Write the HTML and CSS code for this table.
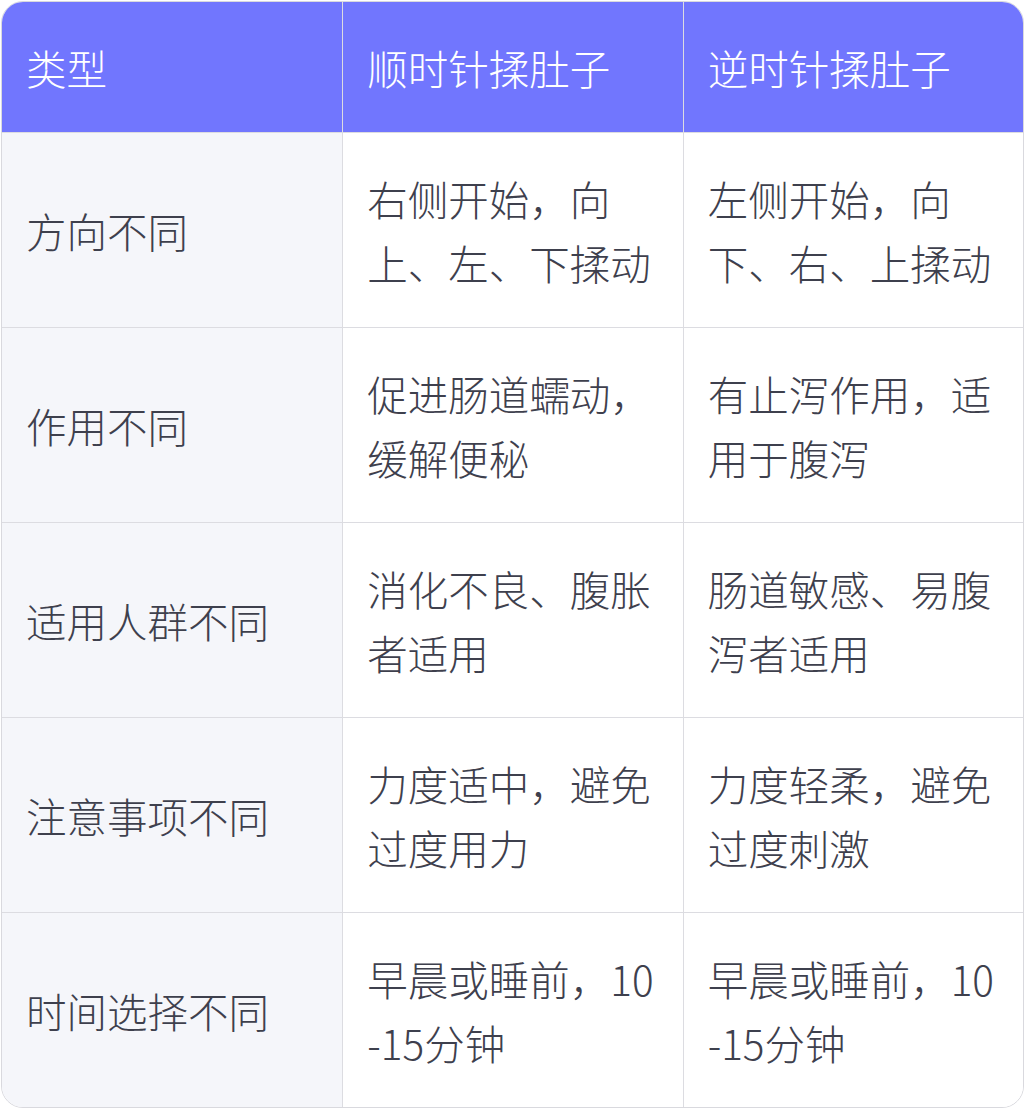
FILE: index.html
```html
<!DOCTYPE html>
<html lang="zh-CN">
<head>
<meta charset="utf-8">
<title>顺时针与逆时针揉肚子</title>
<link rel="stylesheet" href="styles.css">
</head>
<body>
<div class="wrap">
  <table class="cmp">
    <thead>
      <tr>
        <th>类型</th>
        <th>顺时针揉肚子</th>
        <th>逆时针揉肚子</th>
      </tr>
    </thead>
    <tbody>
      <tr>
        <td class="key">方向不同</td>
        <td>右侧开始，向上、左、下揉动</td>
        <td>左侧开始，向下、右、上揉动</td>
      </tr>
      <tr>
        <td class="key">作用不同</td>
        <td>促进肠道蠕动，缓解便秘</td>
        <td>有止泻作用，适用于腹泻</td>
      </tr>
      <tr>
        <td class="key">适用人群不同</td>
        <td>消化不良、腹胀者适用</td>
        <td>肠道敏感、易腹泻者适用</td>
      </tr>
      <tr>
        <td class="key">注意事项不同</td>
        <td>力度适中，避免过度用力</td>
        <td>力度轻柔，避免过度刺激</td>
      </tr>
      <tr>
        <td class="key">时间选择不同</td>
        <td>早晨或睡前，10-15分钟</td>
        <td>早晨或睡前，10-15分钟</td>
      </tr>
    </tbody>
  </table>
</div>
</body>
</html>
```
FILE: styles.css
```css
html, body {
  margin: 0;
  padding: 0;
  background: #ffffff;
}

.wrap {
  margin: 1px;
  border: 1px solid #d9d9de;
  border-radius: 22px;
  overflow: hidden;
}

.cmp {
  width: 100%;
  table-layout: fixed;
  border-collapse: separate;
  border-spacing: 0;
  font-family: "Noto Sans CJK SC", "Noto Sans", sans-serif;
  font-size: 40.5px;
  font-weight: 200;
  line-height: 64px;
  color: #3e404d;
}

.cmp th,
.cmp td {
  padding: 34px 24px 32px;
  text-align: left;
  vertical-align: middle;
  word-break: break-all;
  border-left: 1px solid #dcdce1;
  border-bottom: 1px solid #dcdce1;
}

.cmp th:first-child,
.cmp td:first-child {
  border-left: none;
}

.cmp tbody tr:last-child td {
  border-bottom: none;
}

.cmp th {
  background: #7176fe;
  color: #ffffff;
  font-weight: 200;
}

.cmp td {
  background: #ffffff;
}

.cmp td.key {
  background: #f5f6fa;
}
```
